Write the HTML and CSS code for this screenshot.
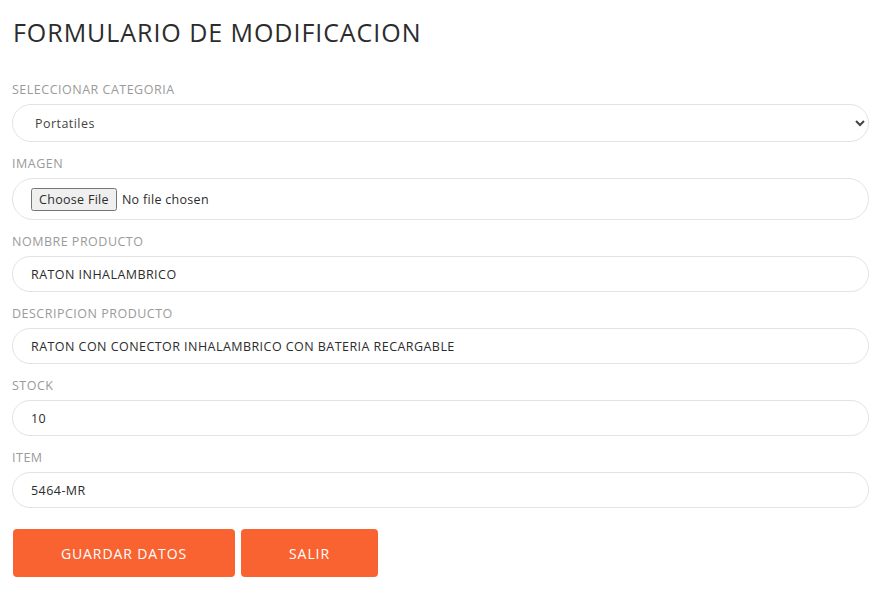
FILE: index.html
```html
<!DOCTYPE html>
<html lang="es">
<head>
<meta charset="utf-8">
<title>Formulario de modificacion</title>
<link rel="stylesheet" href="styles.css">
</head>
<body>
<div class="page">
  <h1 class="title">FORMULARIO DE MODIFICACION</h1>
  <form class="form">
    <div class="group">
      <label class="label">SELECCIONAR CATEGORIA</label>
      <select class="control select">
        <option>Portatiles</option>
      </select>
    </div>
    <div class="group">
      <label class="label">IMAGEN</label>
      <div class="control file-box">
        <input type="file" class="file">
      </div>
    </div>
    <div class="group">
      <label class="label">NOMBRE PRODUCTO</label>
      <input class="control" type="text" value="RATON INHALAMBRICO">
    </div>
    <div class="group">
      <label class="label">DESCRIPCION PRODUCTO</label>
      <input class="control" type="text" value="RATON CON CONECTOR INHALAMBRICO CON BATERIA RECARGABLE">
    </div>
    <div class="group">
      <label class="label">STOCK</label>
      <input class="control" type="text" value="10">
    </div>
    <div class="group">
      <label class="label">ITEM</label>
      <input class="control" type="text" value="5464-MR">
    </div>
    <div class="actions">
      <button type="button" class="btn btn-save">GUARDAR DATOS</button>
      <button type="button" class="btn btn-exit">SALIR</button>
    </div>
  </form>
</div>
</body>
</html>
```
FILE: styles.css
```css
* { box-sizing: border-box; }
html, body { margin: 0; padding: 0; background: #fff; }
body {
  font-family: "Open Sans", "DejaVu Sans", sans-serif;
  color: #2c2c2c;
}
.page {
  padding: 15px 17px 0 12px;
}
.title {
  margin: 0 0 0 1px;
  font-size: 25px;
  font-weight: 400;
  line-height: 34px;
  color: #2c2c2c;
  letter-spacing: 0.95px;
}
.form {
  margin-top: 33px;
  display: flex;
  flex-direction: column;
}
.group {
  display: flex;
  flex-direction: column;
  margin-bottom: 14px;
}
.label {
  font-size: 12.5px;
  line-height: 16px;
  color: #9a9a9a;
  margin-bottom: 6px;
  letter-spacing: 0.5px;
}
.control {
  width: 100%;
  height: 36px;
  border: 1px solid #e3e3e3;
  border-radius: 30px;
  padding: 0 18px;
  font-family: inherit;
  font-size: 12.5px;
  color: #2c2c2c;
  background: #fff;
  outline: none;
  letter-spacing: 0.45px;
}
.select {
  height: 38px;
  padding-left: 18px;
  color: #444;
}
.file-box {
  height: 42px;
  display: flex;
  align-items: center;
  padding-left: 18px;
}
.file {
  font-family: inherit;
  font-size: 12.5px;
  color: #2c2c2c;
  letter-spacing: 0.3px;
}
.file::file-selector-button {
  font-family: inherit;
  font-size: 12.5px;
  color: #2c2c2c;
  letter-spacing: 0.3px;
  margin-right: 5px;
}
.actions {
  display: flex;
  gap: 6px;
  margin-top: 7px;
  padding-left: 1px;
}
.btn {
  height: 48px;
  border: none;
  border-radius: 4px;
  background: #f96332;
  color: #fff;
  font-family: inherit;
  font-size: 14px;
  letter-spacing: 0.9px;
}
.btn-save { width: 222px; }
.btn-exit { width: 137px; }
```
